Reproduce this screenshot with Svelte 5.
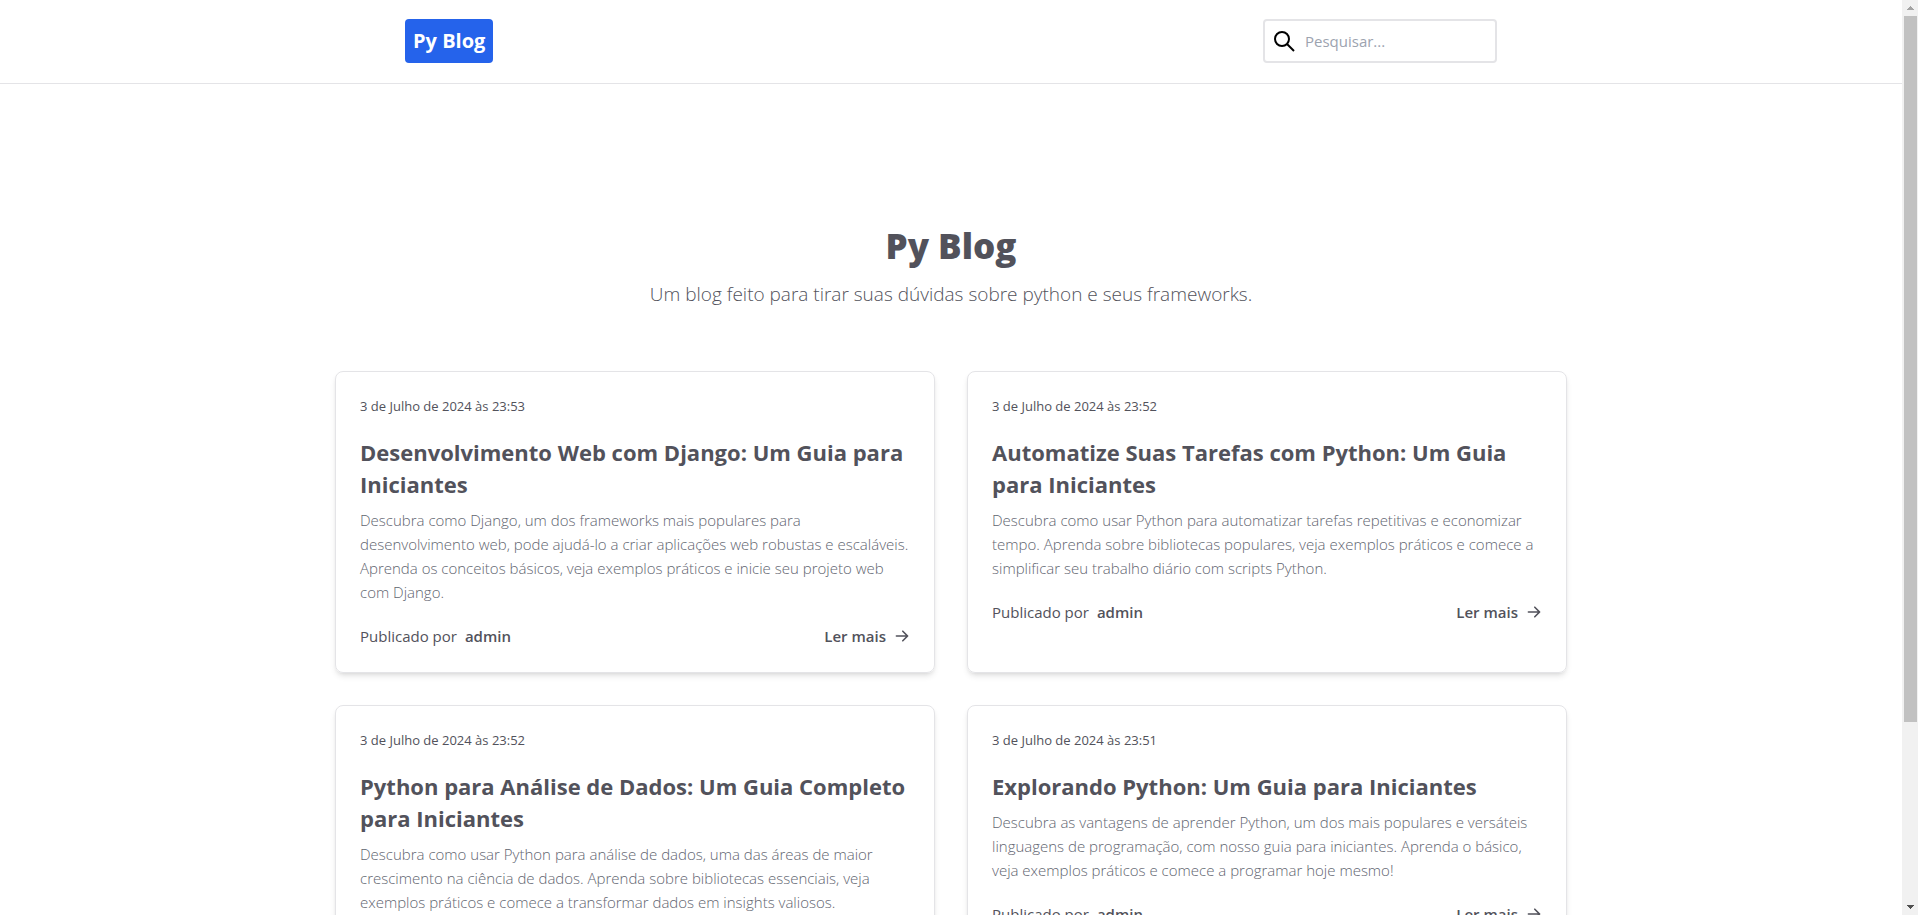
<script>
  const posts = [
    {
      date: '3 de Julho de 2024 às 23:53',
      title: 'Desenvolvimento Web com Django: Um Guia para Iniciantes',
      text: 'Descubra como Django, um dos frameworks mais populares para desenvolvimento web, pode ajudá-lo a criar aplicações web robustas e escaláveis. Aprenda os conceitos básicos, veja exemplos práticos e inicie seu projeto web com Django.'
    },
    {
      date: '3 de Julho de 2024 às 23:52',
      title: 'Automatize Suas Tarefas com Python: Um Guia para Iniciantes',
      text: 'Descubra como usar Python para automatizar tarefas repetitivas e economizar tempo. Aprenda sobre bibliotecas populares, veja exemplos práticos e comece a simplificar seu trabalho diário com scripts Python.'
    },
    {
      date: '3 de Julho de 2024 às 23:52',
      title: 'Python para Análise de Dados: Um Guia Completo para Iniciantes',
      text: 'Descubra como usar Python para análise de dados, uma das áreas de maior crescimento na ciência de dados. Aprenda sobre bibliotecas essenciais, veja exemplos práticos e comece a transformar dados em insights valiosos.'
    },
    {
      date: '3 de Julho de 2024 às 23:51',
      title: 'Explorando Python: Um Guia para Iniciantes',
      text: 'Descubra as vantagens de aprender Python, um dos mais populares e versáteis linguagens de programação, com nosso guia para iniciantes. Aprenda o básico, veja exemplos práticos e comece a programar hoje mesmo!'
    }
  ];
</script>

<div class="shell">
  <div class="page">
    <header>
      <nav>
        <a class="brand" href="#inicio">Py Blog</a>
        <form class="search" role="search">
          <label for="q" aria-label="Pesquisar">
            <svg viewBox="0 0 24 24" width="24" height="24" fill="none" stroke="#000" stroke-width="2">
              <circle cx="9" cy="10" r="7" />
              <path d="M14 15 21 22" />
            </svg>
          </label>
          <input id="q" type="text" placeholder="Pesquisar..." />
        </form>
      </nav>
    </header>

    <main>
      <div class="hero">
        <h1>Py Blog</h1>
        <p>Um blog feito para tirar suas dúvidas sobre python e seus frameworks.</p>
      </div>
      <div class="grid">
        {#each posts as post}
          <article>
            <time>{post.date}</time>
            <h2><a href="#post">{post.title}</a></h2>
            <p>{post.text}</p>
            <footer>
              <span class="author">Publicado por <strong>admin</strong></span>
              <a class="more" href="#post">
                Ler mais
                <svg viewBox="0 0 20 20" width="16" height="16" fill="currentColor">
                  <path fill-rule="evenodd" clip-rule="evenodd" d="M10.293 3.293a1 1 0 011.414 0l6 6a1 1 0 010 1.414l-6 6a1 1 0 01-1.414-1.414L14.586 11H3a1 1 0 110-2h11.586l-4.293-4.293a1 1 0 010-1.414z" />
                </svg>
              </a>
            </footer>
          </article>
        {/each}
      </div>
    </main>
  </div>

  <div class="scrollbar" aria-hidden="true">
    <svg class="arrow" viewBox="0 0 16 16" width="16" height="16" shape-rendering="crispEdges">
      <path fill="#a3a3a3" d="M8 6h1v1h1v1h1v1h1v1H5V9h1V8h1V7h1z" />
    </svg>
    <div class="track"><div class="thumb"></div></div>
    <svg class="arrow" viewBox="0 0 16 16" width="16" height="16" shape-rendering="crispEdges">
      <path fill="#505050" d="M5 6h7v1h-1v1h-1v1H9v1H8V9H7V8H6V7H5z" />
    </svg>
  </div>
</div>

<style>
  :global(body) {
    background: #fff;
    font-family: 'Open Sans', 'Noto Sans', sans-serif;
  }
  .shell {
    display: flex;
    height: 100vh;
    overflow: hidden;
    color: #52525b;
    font-size: 15px;
    line-height: 24px;
  }
  .page {
    flex: 1;
    min-width: 0;
    overflow: hidden;
  }
  a {
    color: inherit;
    text-decoration: none;
  }
  h1, h2, p {
    margin: 0;
  }
  header {
    border-bottom: 1px solid #e4e4e7;
  }
  nav {
    display: flex;
    align-items: center;
    justify-content: space-between;
    max-width: 1092px;
    margin: 0 auto;
    padding: 19px 0 20px;
  }
  .brand {
    padding: 8px;
    border-radius: 4px;
    background: #2563eb;
    color: #fff;
    font-size: 20px;
    font-weight: 700;
    line-height: 28px;
  }
  .search {
    display: flex;
    align-items: center;
    gap: 8px;
    box-sizing: border-box;
    width: 234px;
    height: 44px;
    padding: 0 8px;
    border: 2px solid #e4e4e7;
    border-radius: 4px;
  }
  .search label {
    display: flex;
  }
  .search input {
    flex: 1;
    min-width: 0;
    padding: 0;
    border: 0;
    outline: 0;
    background: none;
    color: #52525b;
    font: inherit;
  }
  .search input::placeholder {
    color: #9ca3af;
    opacity: 1;
  }
  main {
    max-width: 1232px;
    margin: 0 auto;
    padding: 142px 24px 32px;
  }
  .hero {
    margin-bottom: 63px;
    text-align: center;
  }
  .hero h1 {
    margin-bottom: 14px;
    font-size: 35px;
    font-weight: 800;
    line-height: 40px;
  }
  .hero p {
    font-size: 19px;
    font-weight: 300;
    line-height: 28px;
  }
  .grid {
    display: grid;
    grid-template-columns: 1fr 1fr;
    gap: 32px;
  }
  article {
    padding: 24px;
    border: 1px solid #e4e4e7;
    border-radius: 8px;
    box-shadow: 0 4px 6px -1px rgb(0 0 0 / 0.1), 0 2px 4px -2px rgb(0 0 0 / 0.1);
  }
  time {
    display: block;
    margin-bottom: 20px;
    font-size: 13px;
    line-height: 20px;
  }
  article h2 {
    margin-bottom: 8px;
    font-size: 22px;
    font-weight: 700;
    line-height: 32px;
  }
  article p {
    margin-bottom: 20px;
    color: #5f6570;
    font-weight: 300;
  }
  footer {
    display: flex;
    align-items: center;
    justify-content: space-between;
  }
  .author {
    display: flex;
    gap: 8px;
  }
  strong, .more {
    font-weight: 600;
  }
  .more {
    display: flex;
    align-items: center;
    gap: 8px;
  }
  .scrollbar {
    display: flex;
    flex-direction: column;
    width: 16px;
    background: #f1f1f1;
  }
  .arrow {
    display: block;
  }
  .track {
    flex: 1;
    padding: 0 1px 0 2px;
  }
  .thumb {
    height: 80%;
    background: #c1c1c1;
  }
</style>
